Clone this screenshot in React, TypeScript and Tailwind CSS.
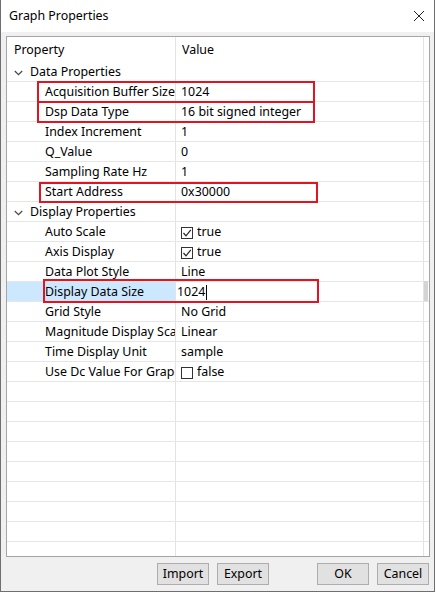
import React from 'react';

type Row =
  | { kind: 'cat'; label: string }
  | { kind: 'prop'; label: string; value?: string; check?: boolean; editing?: boolean };

const rows: Row[] = [
  { kind: 'cat', label: 'Data Properties' },
  { kind: 'prop', label: 'Acquisition Buffer Size', value: '1024' },
  { kind: 'prop', label: 'Dsp Data Type', value: '16 bit signed integer' },
  { kind: 'prop', label: 'Index Increment', value: '1' },
  { kind: 'prop', label: 'Q_Value', value: '0' },
  { kind: 'prop', label: 'Sampling Rate Hz', value: '1' },
  { kind: 'prop', label: 'Start Address', value: '0x30000' },
  { kind: 'cat', label: 'Display Properties' },
  { kind: 'prop', label: 'Auto Scale', value: 'true', check: true },
  { kind: 'prop', label: 'Axis Display', value: 'true', check: true },
  { kind: 'prop', label: 'Data Plot Style', value: 'Line' },
  { kind: 'prop', label: 'Display Data Size', value: '1024', editing: true },
  { kind: 'prop', label: 'Grid Style', value: 'No Grid' },
  { kind: 'prop', label: 'Magnitude Display Scale', value: 'Linear' },
  { kind: 'prop', label: 'Time Display Unit', value: 'sample' },
  { kind: 'prop', label: 'Use Dc Value For Graph', value: 'false', check: false },
];

function Chevron() {
  return (
    <svg width="9" height="6" viewBox="0 0 9 6" className="shrink-0">
      <path d="M0.8 1 L4.5 4.6 L8.2 1" fill="none" stroke="#4a4a4a" strokeWidth="1.3" />
    </svg>
  );
}

function CheckBox({ checked }: { checked: boolean }) {
  return (
    <span className="w-[12px] h-[12px] border border-[#333] bg-white flex items-center justify-center shrink-0">
      {checked && (
        <svg width="10" height="10" viewBox="0 0 10 10">
          <path d="M1.5 5 L4 7.8 L8.8 1.8" fill="none" stroke="#222" strokeWidth="1.2" />
        </svg>
      )}
    </span>
  );
}

function GridRow({ row }: { row?: Row }) {
  const selected = row?.kind === 'prop' && row.editing;
  return (
    <div className="flex h-[20px] shrink-0 border-b border-[#e6e6e6] box-border">
      <div
        className={`w-[169px] shrink-0 border-r border-[#e3e3e3] flex items-center overflow-hidden whitespace-nowrap pt-[2px] ${
          selected ? 'bg-[#cce8ff]' : ''
        }`}
      >
        {row?.kind === 'cat' && (
          <div className="flex items-center pl-[7px] gap-[7px]">
            <Chevron />
            <span>{row.label}</span>
          </div>
        )}
        {row?.kind === 'prop' && <span className="pl-[38px]">{row.label}</span>}
      </div>
      <div className="w-[248px] shrink-0 border-r border-[#e3e3e3] flex items-center whitespace-nowrap overflow-hidden pt-[2px]">
        {row?.kind === 'prop' && row.check !== undefined && (
          <div className="flex items-center pl-[5px] gap-[4px]">
            <CheckBox checked={row.check} />
            <span>{row.value}</span>
          </div>
        )}
        {row?.kind === 'prop' && row.check === undefined && !row.editing && (
          <span className="pl-[5px]">{row.value}</span>
        )}
        {row?.kind === 'prop' && row.editing && (
          <div className="flex items-center pl-[1px]">
            <span>{row.value}</span>
            <span className="w-px h-[15px] bg-black ml-px" />
          </div>
        )}
      </div>
      <div className="w-[5px] shrink-0" />
    </div>
  );
}

function Btn({ children, className = '' }: { children: React.ReactNode; className?: string }) {
  return (
    <button className={`w-[52px] h-[22px] bg-[#e1e1e1] border border-[#adadad] flex items-center justify-center text-black pt-[1px] ${className}`}>
      {children}
    </button>
  );
}

export default function App() {
  const empty = Array.from({ length: 10 });
  return (
    <div
      className="w-[435px] h-[592px] bg-[#f0f0f0] border-x border-b border-[#6f6f6f] flex flex-col text-[12.4px] text-black"
      style={{ fontFamily: '"Noto Sans", "Liberation Sans", sans-serif' }}
    >
      <div className="h-[32px] bg-white flex items-center justify-between pl-[8px] pr-[8px] shrink-0">
        <span className="pt-[1px]">Graph Properties</span>
        <svg width="12" height="12" viewBox="0 0 12 12" className="mr-[1px]">
          <path d="M1 1 L11 11 M11 1 L1 11" stroke="#222" strokeWidth="1" />
        </svg>
      </div>

      <div className="flex-1 flex flex-col pl-[5px] pr-[4px] pt-[4px] pb-[6px]">
        <div className="relative h-[521px] shrink-0 border border-[#a5a5a5] bg-white flex flex-col overflow-hidden">
          <div className="flex h-[25px] shrink-0">
            <div className="w-[169px] shrink-0 border-r border-[#e3e3e3] flex items-center pl-[7px] pt-[1px]">Property</div>
            <div className="w-[248px] shrink-0 border-r border-[#e3e3e3] flex items-center pl-[6px] pt-[1px]">Value</div>
            <div className="w-[5px] shrink-0" />
          </div>
          {rows.map((r, i) => (
            <GridRow key={i} row={r} />
          ))}
          {empty.map((_, i) => (
            <GridRow key={`e${i}`} />
          ))}

          {/* scroll thumb */}
          <div className="absolute left-[417px] top-[244px] w-[4px] h-[20px] bg-[#d4d4d4]" />

          {/* red annotation boxes */}
          <div className="absolute left-[30px] top-[44px] w-[278px] h-[22px] border-2 border-[#e5131f]" />
          <div className="absolute left-[30px] top-[64px] w-[278px] h-[22px] border-2 border-[#e5131f]" />
          <div className="absolute left-[32px] top-[145px] w-[279px] h-[21px] border-2 border-[#e5131f]" />
          <div className="absolute left-[36px] top-[242px] w-[276px] h-[24px] border-2 border-[#e5131f]" />
        </div>

        <div className="flex justify-end items-center mt-[6px] mr-[1px] gap-[8px]">
          <Btn>Import</Btn>
          <Btn>Export</Btn>
          <Btn className="ml-[40px]">OK</Btn>
          <Btn>Cancel</Btn>
        </div>
      </div>
    </div>
  );
}
